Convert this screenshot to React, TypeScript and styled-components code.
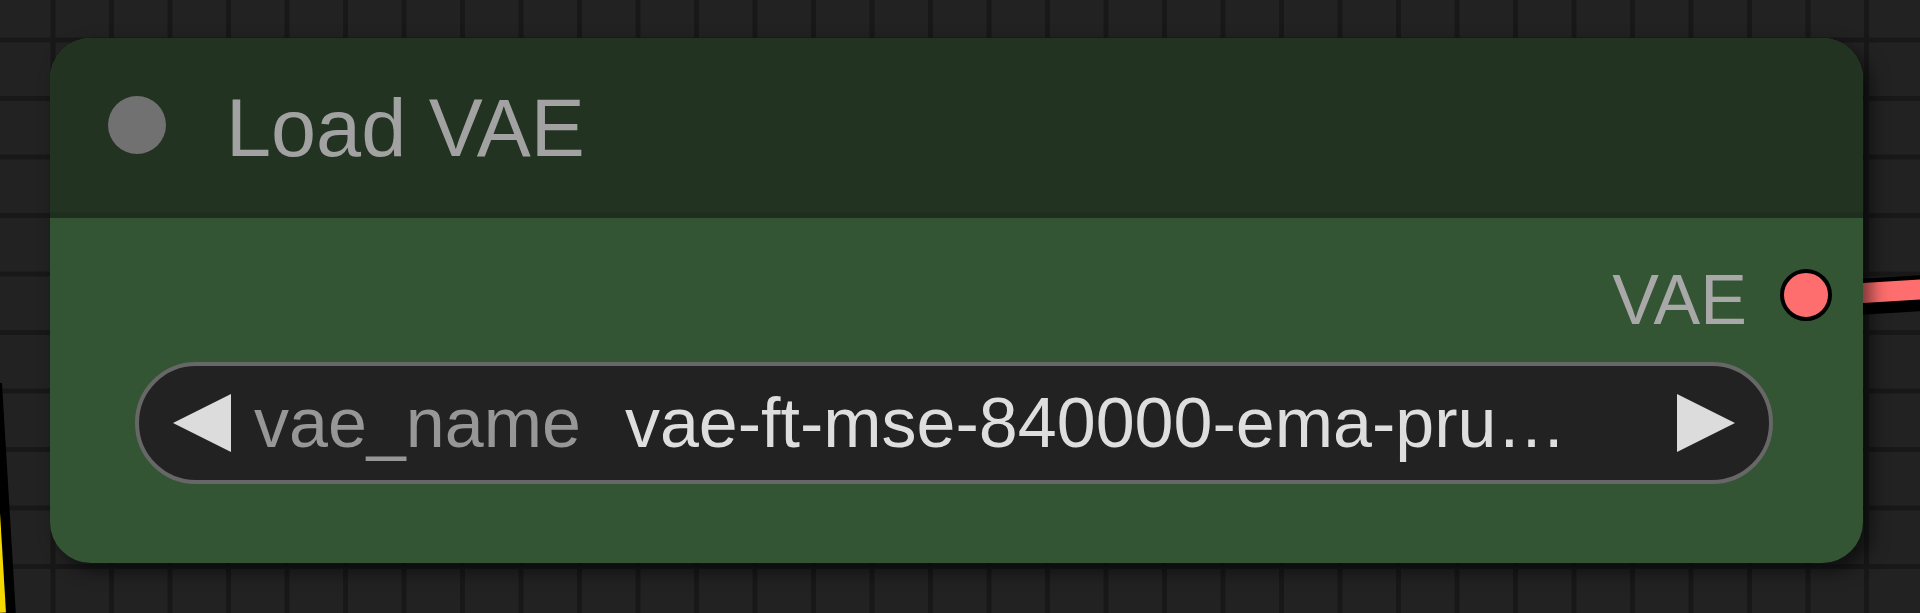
import React from "react";
import styled, { createGlobalStyle } from "styled-components";

const GlobalStyle = createGlobalStyle`
  html, body {
    margin: 0;
    padding: 0;
    background: #222;
    overflow: hidden;
  }
  body {
    font-family: "Liberation Sans", Arial, sans-serif;
  }
`;

const Canvas = styled.div`
  position: relative;
  width: 1920px;
  height: 613px;
  overflow: hidden;
  background-color: #222;
  background-image:
    linear-gradient(to right, #181818 5px, transparent 5px),
    linear-gradient(to bottom, #181818 5px, transparent 5px);
  background-size: 58.5px 58.5px;
  background-position: 50.5px 37.5px;
`;

const Links = styled.svg`
  position: absolute;
  left: 0;
  top: 0;
  pointer-events: none;
`;

const Node = styled.div`
  position: absolute;
  left: 50px;
  top: 38px;
  width: 1813px;
  height: 525px;
  border-radius: 41px;
  background: #335533;
  box-shadow: 8px 8px 18px rgba(0, 0, 0, 0.55);
  overflow: hidden;
  display: flex;
  flex-direction: column;
`;

const TitleBar = styled.div`
  flex: none;
  height: 174px;
  background: #223322;
  border-bottom: 6px solid #1f2f1f;
  display: flex;
  align-items: center;
  gap: 60px;
  padding-left: 58px;
`;

const StatusDot = styled.div`
  width: 58px;
  height: 58px;
  border-radius: 50%;
  background: #717171;
`;

const Title = styled.div`
  font-size: 81px;
  line-height: 1;
  color: #a2a2a2;
  padding-top: 6px;
  white-space: nowrap;
`;

const Body = styled.div`
  display: flex;
  flex-direction: column;
  padding-top: 48px;
`;

const OutputRow = styled.div`
  height: 58px;
  display: flex;
  justify-content: flex-end;
  align-items: center;
  gap: 33px;
  padding-right: 31px;
`;

const SlotLabel = styled.div`
  font-size: 70px;
  line-height: 1;
  color: #a8a8a8;
  padding-top: 10px;
`;

const SlotDot = styled.div<{ $color: string }>`
  width: 44px;
  height: 44px;
  border-radius: 50%;
  border: 4px solid #000;
  background: ${(p) => p.$color};
`;

const Combo = styled.div`
  box-sizing: border-box;
  height: 122px;
  margin: 38px 90px 0 85px;
  border: 4px solid #676767;
  border-radius: 61px;
  background: #222;
  display: flex;
  align-items: center;
  padding: 0 34px;
  font-size: 70px;
  line-height: 1;
  white-space: nowrap;
`;

const Arrow = styled.svg`
  flex: none;
  display: block;
`;

const ComboLabel = styled.span`
  margin-left: 23px;
  color: #979797;
`;

const ComboValue = styled.span`
  flex: 1;
  margin-left: 44px;
  color: #dedede;
`;

const ArrowIcon = ({ dir }: { dir: "left" | "right" }) => (
  <Arrow width={58} height={58} viewBox="0 0 58 58">
    <polygon
      points={dir === "left" ? "58,0 0,29 58,58" : "0,0 58,29 0,58"}
      fill="#dcdcdc"
    />
  </Arrow>
);

const App = () => {
  return (
    <>
      <GlobalStyle />
      <Canvas>
        <Links width={1920} height={613} viewBox="0 0 1920 613">
          <path d="M-16 384 L-2 617" stroke="#000" strokeWidth={36} fill="none" />
          <path d="M-18 380 L-4 613" stroke="#f5d800" strokeWidth={20} fill="none" />
          <path d="M1806 300 L1940 292" stroke="#000" strokeWidth={36} fill="none" />
          <path d="M1806 296.5 L1940 288.2" stroke="#ff6e6e" strokeWidth={20} fill="none" />
        </Links>
        <Node>
          <TitleBar>
            <StatusDot />
            <Title>Load VAE</Title>
          </TitleBar>
          <Body>
            <OutputRow>
              <SlotLabel>VAE</SlotLabel>
              <SlotDot $color="#ff6e6e" />
            </OutputRow>
            <Combo>
              <ArrowIcon dir="left" />
              <ComboLabel>vae_name</ComboLabel>
              <ComboValue>vae-ft-mse-840000-ema-pru…</ComboValue>
              <ArrowIcon dir="right" />
            </Combo>
          </Body>
        </Node>
      </Canvas>
    </>
  );
};

export default App;
